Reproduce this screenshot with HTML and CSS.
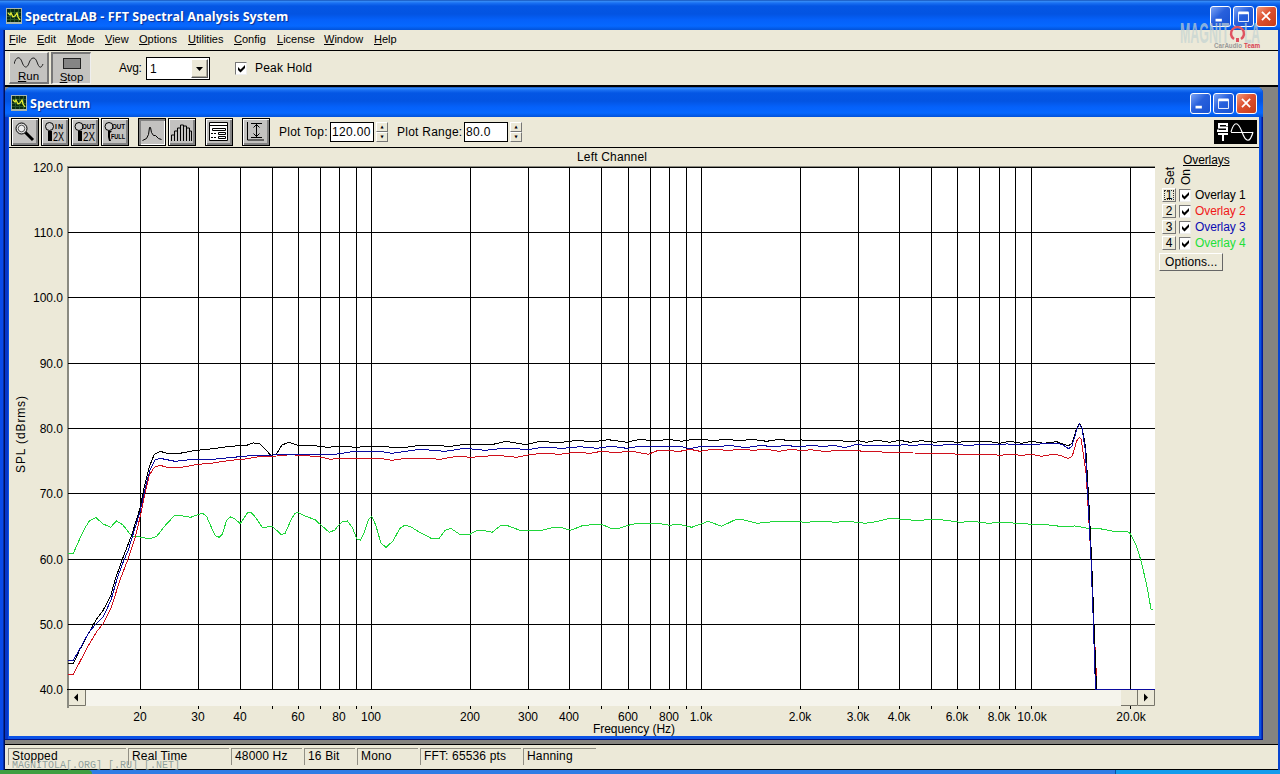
FILE: index.html
```html
<!DOCTYPE html>
<html lang="en">
<head>
<meta charset="utf-8">
<title>SpectraLAB - FFT Spectral Analysis System</title>
<link rel="stylesheet" href="styles.css">
</head>
<body>
<svg class="defs" width="0" height="0">
  <defs>
    <symbol id="app" viewBox="0 0 16 16"><path fill="#a9b7b0" d="M0 0h16v16H0z"/><path fill="#0a2a12" d="M1 1h14v13H1z"/><path d="M4.500 1v13M8.500 1v13M12.500 1v13M1 4.500h14M1 8.500h14M1 11.500h14" stroke="#27562b"/><path d="M2 5l2 2 1-2 2 4 2-1 2-3 1 4 2 3" fill="none" stroke="#e5ee35" stroke-width="1.300"/></symbol>
    <symbol id="tick" viewBox="0 0 9 9"><path d="M1 3v3l2.500 2.500L8 4V1L3.500 5.500z"/></symbol>
  </defs>
</svg>
<div class="window">
  <header class="titlebar">
    <svg class="appicon"><use href="#app"/></svg><h1 class="caption main">SpectraLAB - FFT Spectral Analysis System</h1>
    <div class="controls"><span class="ctl"><svg viewBox="0 0 21 21"><path d="M5 13h7v3H5z" fill="#fff"/></svg></span><span class="ctl"><svg viewBox="0 0 21 21"><path d="M5 6h11v10H5z" fill="none" stroke="#fff"/><path d="M5 5h11v3H5z" fill="#fff"/></svg></span><span class="ctl close"><svg viewBox="0 0 21 21"><path d="M5.500 5.500l9 9m0-9l-9 9" stroke="#fff" stroke-width="2"/></svg></span></div>
  </header>
  <nav class="menu">
    <span class="m1"><u>F</u>ile</span><span class="m2"><u>E</u>dit</span><span class="m3"><u>M</u>ode</span><span class="m4"><u>V</u>iew</span><span class="m5"><u>O</u>ptions</span><span class="m6"><u>U</u>tilities</span><span class="m7"><u>C</u>onfig</span><span class="m8"><u>L</u>icense</span><span class="m9"><u>W</u>indow</span><span class="m10"><u>H</u>elp</span>
  </nav>
  <div class="mainbar">
    <div class="run"><svg width="30" height="14" viewBox="0 0 30 14"><path d="M0 8C2 0 6 0 8 6s5 7 7 1 6-7 8-1 4 7 6 2" fill="none" stroke="#222"/></svg><span><u>R</u>un</span></div>
    <div class="run stop"><i class="block"></i><span><u>S</u>top</span></div>
    <label class="avg">Avg:</label>
    <div class="combo"><span>1</span><b><svg width="7" height="4"><path d="M0 0h7L3.500 4z"/></svg></b></div>
    <span class="check"><svg><use href="#tick"/></svg></span><span class="peak">Peak Hold</span>
  </div>
  <main class="mdi">
    <section class="child">
      <header class="titlebar childbar">
        <svg class="appicon"><use href="#app"/></svg><h2 class="caption">Spectrum</h2>
        <div class="controls"><span class="ctl"><svg viewBox="0 0 21 21"><path d="M5 13h7v3H5z" fill="#fff"/></svg></span><span class="ctl"><svg viewBox="0 0 21 21"><path d="M5 6h11v10H5z" fill="none" stroke="#fff"/><path d="M5 5h11v3H5z" fill="#fff"/></svg></span><span class="ctl close"><svg viewBox="0 0 21 21"><path d="M5.500 5.500l9 9m0-9l-9 9" stroke="#fff" stroke-width="2"/></svg></span></div>
      </header>
      <div class="client">
        <div class="tools">
          <span class="tool"><svg viewBox="0 0 24 24"><path d="M12 12l8 8" stroke="#000" stroke-width="3"/><circle cx="8.500" cy="8.500" r="5.500" fill="#ddd" stroke="#000"/><circle cx="8.500" cy="8.500" r="3.300" fill="#eee" stroke="#333" stroke-width=".8"/></svg></span>
          <span class="tool"><svg viewBox="0 0 24 24"><circle cx="6.500" cy="6.500" r="4" fill="#ccc" stroke="#000"/><path d="M5 11h4v10H5z"/><text class="tiny" x="12" y="9" textLength="8">IN</text><text class="two" x="10" y="21" textLength="11" lengthAdjust="spacingAndGlyphs">2X</text></svg></span>
          <span class="tool"><svg viewBox="0 0 24 24"><circle cx="6" cy="6.500" r="4" fill="#ccc" stroke="#000"/><path d="M5 11h4v10H5z"/><text class="tiny" x="9" y="9" textLength="13" lengthAdjust="spacingAndGlyphs">OUT</text><text class="two" x="10" y="21" textLength="12" lengthAdjust="spacingAndGlyphs">2X</text></svg></span>
          <span class="tool"><svg viewBox="0 0 24 24"><circle cx="6" cy="6.500" r="4" fill="#ccc" stroke="#000"/><path d="M5 11h4l-2 2v5l1 3H6l-1-4z"/><text class="tiny" x="9" y="9" textLength="13" lengthAdjust="spacingAndGlyphs">OUT</text><text class="tiny" x="8" y="19" textLength="14" lengthAdjust="spacingAndGlyphs">FULL</text></svg></span>
          <span class="tool on g1"><svg viewBox="0 0 24 24"><path d="M2.500 20.500l4-2 2-4 1-7 1 0 1 5 2 3h2l3 3 3 1" fill="none" stroke="#000"/></svg></span>
          <span class="tool"><svg viewBox="0 0 24 24"><path d="M1.500 21v-6h3v-4h3V8h3V5h3v1h3v2h3v3h2v10M4.500 15v6M7.500 11v10M10.500 8v13M13.500 6v15M16.500 8v13M19.500 11v10" fill="none" stroke="#000"/></svg></span>
          <span class="tool g2"><svg viewBox="0 0 24 24"><path d="M2.500 2.500h18v18h-18z" fill="#fff" stroke="#000"/><path d="M3 5.500h17M5.500 8.500h13v2h-13zM11.500 12.500h7v2h-7zM11.500 16.500h7v2h-7z" fill="none" stroke="#000"/><path d="M4 13.500h2m1 0h2M4 17.500h2m1 0h2" stroke="#000"/></svg></span>
          <span class="tool g2"><svg viewBox="0 0 24 24"><path d="M3.500 2v18H20M7 3.500h11M7 17.500h11M12.500 4v13M9.500 7.500l3-3 3 3M9.500 13.500l3 3 3-3" fill="none" stroke="#000"/></svg></span>
          <label class="lab top">Plot Top:</label><div class="field">120.00</div><div class="spin"><i>▲</i><i>▼</i></div>
          <label class="lab range">Plot Range:</label><div class="field">80.0</div><div class="spin"><i>▲</i><i>▼</i></div>
          <svg class="st" viewBox="0 0 43 24"><path fill="#000" d="M0 0h43v24H0z"/><path d="M13 6V4H5v3.500h8V11H4V9.500M4 14h10M9 14v7" fill="none" stroke="#fff" stroke-width="2"/><path d="M17 12.500h22M17 12C20 1 24 1 28 12s8 11 11 0" fill="none" stroke="#fff" stroke-width="1.200"/></svg>
        </div>
        <div class="workspace">
          <svg class="chart" width="1147" height="588" viewBox="9 148 1147 588">
            <path fill="#fff" d="M68 167h1087v523H68z"/>
            <path fill="#8a8a80" d="M67 166h1088v1H67zM67 166h2v542h-2z"/>
            <g class="grid"><path d="M68 167.500H1155M68 232.500H1155M68 297.500H1155M68 363.500H1155M68 428.500H1155M68 493.500H1155M68 559.500H1155M68 624.500H1155M67 689.500H1155"/><path d="M140.500 168V690M198.500 168V690M240.500 168V690M272.500 168V690M298.500 168V690M320.500 168V690M339.500 168V690M356.500 168V690M371.500 168V690M470.500 168V690M528.500 168V690M569.500 168V690M601.500 168V690M628.500 168V690M650.500 168V690M669.500 168V690M686.500 168V690M701.500 168V690M800.500 168V690M858.500 168V690M899.500 168V690M931.500 168V690M957.500 168V690M979.500 168V690M999.500 168V690M1015.500 168V690M1031.500 168V690M1130.500 168V690"/></g>
            <g class="curves">
              <polyline stroke="#1fd63a" points="68.300,553.300 73.300,553.300 80.700,536.700 85,528 89.300,521 96,517.700 103.300,524 110.700,527.300 113.500,524 116.700,521 122.700,524.700 130,534 134,536.500 140,537 149.300,539 156.700,536.300 165,525.700 174.300,515.700 181.700,515.700 190.700,517.300 197,515 202.700,513.300 206.700,516.700 214,533.300 216,536 219.300,537.300 222.300,534.300 226.700,520 230.700,516.700 235,519 240.300,523.700 247.300,513 251,512.300 255,516.700 262.300,527.300 272.700,526.700 281,534.300 285,533.700 291.700,518.300 295,513.500 297.700,512.300 305,516 315,519.700 321.700,525.700 329.300,532.300 335,530 339.300,524.300 343,521.500 347.300,521 352.300,527.300 356.700,538.700 360.300,540.300 364,532.700 368.300,520 371.700,516.300 375.700,525 381,543.300 386,547.300 392.700,541.300 400,528.300 405,525 411.700,527.300 420,532.700 426.700,535.700 431.700,538.700 439,538.700 445,530.300 450.700,528.300 460.700,535 469.300,534.700 477.300,530.300 485,530.700 492.300,532.300 500,526 506.700,525.300 520,530.300 541.700,530.300 553.300,527.300 561.700,527.700 570.700,530.300 583.300,525.300 601.700,524.300 611.700,528.700 620,528 631.700,524.300 640,523.300 658.300,523.300 670,525.300 678.300,524 691.700,527.300 700,524.300 708.300,521.300 721.700,526.300 736.700,519 743.300,519.700 756.700,523.300 776.700,521.300 796.700,521.700 806.700,522.300 821.700,521 835,522.300 848.300,521.300 865,523.300 876.700,521.700 890,518.300 903.300,519.300 918.300,520.700 931.700,519 946.700,520.300 960,522.300 973.300,521.300 988,523.300 1000,522.300 1018,523.300 1031.700,524.300 1046.700,524.700 1060,526.300 1075,526 1088,528.300 1100,528.700 1111.700,531 1126.700,531.300 1130,533.300 1136.700,546.700 1141,560.700 1146.700,585 1151,609 1152.700,609.700"/>
              <polyline stroke="#d0101c" points="68.300,674.300 73.300,674.300 88.300,645.700 96.700,631.700 103.300,623.300 111,608.300 120,580 128.300,558.300 135,538.300 141,513.300 145,493.300 149.300,475 154.300,467.300 160,465.300 167.300,467.300 181.700,467.300 198.300,464.300 213.300,463 230,460.300 243.300,459.300 261.700,456.300 276.700,456 290,454.700 306.700,455.700 320,457 330.700,459.300 340,458.300 380,458.300 391.700,460.300 406.700,458.300 426.700,458.300 440,459.300 456.700,456.300 471.700,457.300 496.700,455.300 516.700,457.300 528.300,455 541.700,453.300 560,454.300 575,452.300 590,453.300 601.700,451.300 616.700,452.700 630,451 648.300,454.300 658.300,450.300 680,451.300 690,449.300 700,451.300 711.700,449.300 728.300,450.300 743.300,449.300 753.300,450.300 766.700,449.300 779.300,451.300 791.700,449.300 801.700,450.700 810.700,449.700 823.300,451.300 840,450.700 880,451.300 883,452.300 913,453 951.700,453.300 956.700,454.300 990,454.300 1000,455.300 1010,454.300 1021.700,455.300 1031.700,454.300 1041.700,456.300 1053.300,454.300 1060,455.300 1068.300,458.700 1072.300,456 1076.700,441 1079.300,437.300 1081,439.300 1083.300,453.300 1086,473 1088.600,515 1091.600,570 1094,625 1097,689"/>
              <polyline stroke="#000" points="68.300,663.300 73.300,663.300 80,649.300 86.700,636.700 96,620 103.300,610 111,595 115,580 123.300,556.700 131.700,535 140,508.300 144,488.300 149.300,466.700 154.300,454.300 160,451.300 167.300,453.300 180,453.300 193.300,450.700 213.300,448.700 230,446.300 246.700,445.300 253.300,443 259.300,443.300 265,448.700 270.700,455.300 276,454.700 281.700,445.300 288.300,442.300 298.300,445.300 315,445.700 326.700,447.300 340,446.300 356.700,447.300 368,446.300 380,446.300 393.300,447.300 408.300,447 420,445.300 440,445.300 448.300,446.700 465,444.300 493.300,444.300 506,441.300 521.700,444 527.300,444.300 540,441.300 558.300,442.700 578.300,440.300 591.700,442 608.300,439.700 626.700,442.300 640,439.300 655,441 668.300,439.300 681.700,441.300 693.300,439.300 703.300,439.300 713.300,440.700 725,439.300 740,440.700 751.700,439.300 766.700,441.300 779.300,439.300 791.700,441 800,440 835,440.300 850,441.700 858,440.700 866.700,442.300 877,440.300 890,442.300 900,440.300 910,442.300 921.700,440.700 935,442.300 945,441 956.700,442.300 970,441.300 985,442 988.300,441.300 1000,443.300 1010,441.300 1021.700,443.300 1031.700,441.300 1043.300,443.300 1056.700,441.700 1068.300,446 1072.300,442.700 1076.700,428.300 1079.300,423.300 1081.700,426.700 1085.600,446.700 1088.800,500 1091.600,560 1093.600,613 1096.500,689"/>
              <polyline stroke="#0b0ba0" points="68.300,660.300 73.300,660.300 80.700,647.300 89,632 96,624 103.300,616.700 111,600 117.300,578 123.300,561.700 128.300,550 140,511.700 146,485 150,470 155,460 160,458.300 175,461.300 193.300,459.300 213.300,459.300 233.300,457.300 255,455.300 273.300,455 290,454.300 335,454.300 355,451.300 380,451.300 391.700,453.300 420,449.300 433,450.300 445,451.300 465,448.300 485,450.300 500,448.700 515,448.300 526.700,450 541.700,447.300 563.300,448.300 580,446.700 596.700,448.300 611.700,446.300 626.700,448.300 640,446.300 656.700,447 680,446.300 690,448.700 701.700,446.300 716.700,447 730,445.300 745,447.700 761.700,445.300 773.300,447 786.700,445.300 798.300,447 811.700,445.300 823.300,446.700 833.300,445.300 845,447.700 856.700,444.300 870,446 900,445.300 903,444.300 912,445.700 923.300,444.300 936.700,445.300 956.700,444.300 970,445.700 978,444.300 985,445 1006.700,444 1031.700,444.300 1058,443.300 1063.300,445 1068.300,448.700 1071.700,446.700 1076.700,430 1079.300,424 1082,428.300 1085.300,450 1088,500 1091,560 1093,613 1095.500,689.500 1155,689.500"/>
            </g>
            <path fill="#f5f4ec" d="M69 690h1086v16H69z"/>
            <g class="sb"><path fill="#ece9d8" d="M69 690h17v16H69zM1121 690h17v16h-17zM1138 690h17v16h-17z"/><path d="M85.500 690v15.500H69M1137.500 690v15.500H1121M1154.500 690v15.500H1138" fill="none" stroke="#77756a"/><path d="M78 693.500v8l-4-4zM1144 693.500v8l4-4z"/></g>
            <path class="ticks" d="M140.500 706v3M198.500 706v3M240.500 706v3M272.500 706v3M298.500 706v3M320.500 706v3M339.500 706v3M356.500 706v3M371.500 706v3M470.500 706v3M528.500 706v3M569.500 706v3M601.500 706v3M628.500 706v3M650.500 706v3M669.500 706v3M686.500 706v3M701.500 706v3M800.500 706v3M858.500 706v3M899.500 706v3M931.500 706v3M957.500 706v3M979.500 706v3M999.500 706v3M1015.500 706v3M1031.500 706v3M1130.500 706v3"/>
            <g class="ylab"><text x="63" y="172">120.0</text><text x="63" y="237">110.0</text><text x="63" y="302">100.0</text><text x="63" y="368">90.0</text><text x="63" y="433">80.0</text><text x="63" y="498">70.0</text><text x="63" y="564">60.0</text><text x="63" y="629">50.0</text><text x="63" y="694">40.0</text></g>
            <g class="xlab"><text x="140" y="721">20</text><text x="198" y="721">30</text><text x="240" y="721">40</text><text x="298" y="721">60</text><text x="339" y="721">80</text><text x="371" y="721">100</text><text x="470" y="721">200</text><text x="528" y="721">300</text><text x="569" y="721">400</text><text x="628" y="721">600</text><text x="669" y="721">800</text><text x="701" y="721">1.0k</text><text x="800" y="721">2.0k</text><text x="858" y="721">3.0k</text><text x="899" y="721">4.0k</text><text x="957" y="721">6.0k</text><text x="999" y="721">8.0k</text><text x="1032" y="721">10.0k</text><text x="1131" y="721">20.0k</text>
            <text x="612" y="161" textLength="70">Left Channel</text><text x="634" y="733" textLength="82">Frequency (Hz)</text><text transform="translate(25 434.500) rotate(-90)" textLength="77">SPL (dBrms)</text></g>
          </svg>
          <aside class="overlays">
            <div class="ovtitle"><u>Overlays</u></div>
            <div class="ovhead"><span>Set</span><span>On</span></div>
            <div class="ov"><b class="focus">1</b><span class="check"><svg><use href="#tick"/></svg></span><span>Overlay 1</span></div>
            <div class="ov red"><b>2</b><span class="check"><svg><use href="#tick"/></svg></span><span>Overlay 2</span></div>
            <div class="ov blue"><b>3</b><span class="check"><svg><use href="#tick"/></svg></span><span>Overlay 3</span></div>
            <div class="ov green"><b>4</b><span class="check"><svg><use href="#tick"/></svg></span><span>Overlay 4</span></div>
            <div class="options">Options...</div>
          </aside>
        </div>
      </div>
    </section>
  </main>
  <footer class="status"><span class="s1">Stopped</span><span class="s2">Real Time</span><span class="s3">48000 Hz</span><span class="s4">16 Bit</span><span class="s5">Mono</span><span class="s6">FFT: 65536 pts</span><span class="s7">Hanning</span></footer>
</div>
<div class="taskbar"><i class="start"></i><i class="tray"></i></div>
<svg class="brand" width="84" height="36" viewBox="0 0 84 36"><g class="brandname"><text x="0" y="25" textLength="49" lengthAdjust="spacingAndGlyphs">MAGNIT</text><text x="64" y="25" textLength="16" lengthAdjust="spacingAndGlyphs">LA</text></g><path d="M54 21a6.500 6.500 0 1 1 7 0" fill="none" stroke="#df5360" stroke-width="2.500"/><path d="M56 20h3v4h-3z" fill="#df5360"/><text class="team" x="34" y="30" textLength="28" lengthAdjust="spacingAndGlyphs">CarAudio</text><text class="team hot" x="64" y="30" textLength="16" lengthAdjust="spacingAndGlyphs">Team</text></svg>
<svg class="mark" width="180" height="14"><text x="3" y="9" textLength="168">MAGNITOLA[.ORG] [.RU] [.NET]</text></svg>
</body>
</html>
```
FILE: styles.css
```css
* { box-sizing: border-box; }
body { margin: 0; width: 1280px; height: 774px; overflow: hidden; position: relative; display: flex; flex-direction: column; background: #0a4fe0; font: 12px/14px "Liberation Sans", sans-serif; color: #000; }
.defs { position: absolute; }
.window { height: 770px; display: flex; flex-direction: column; padding: 0 2px 0 5px; background: linear-gradient(90deg, #0a4be8 0 3px, #00105e 4px 5px, #ece9d8 5px 1277px, #000b4c 1277px 1278px, #0845d0 1278px); }
.titlebar { height: 30px; flex: none; margin: 0 -2px 0 -5px; padding: 2px 3px 0 6px; display: flex; align-items: center; background: linear-gradient(#063a9e 0, #3a90f8 1px, #1a70f2 3px, #0456e4 6px, #0354e2 14px, #0561fa 20px, #0668ff 26px, #0252d8 30px); }
.appicon { width: 16px; height: 16px; margin-right: 3px; margin-top: -1px; }
.caption { margin: 0; font: bold 12.5px/18px "Open Sans", sans-serif; color: #fff; text-shadow: 1px 1px 1px #0a2d90; flex: 1; white-space: nowrap; }
.main { letter-spacing: .07px; padding-top: 1px; }
.controls { display: flex; gap: 2px; }
.ctl { width: 21px; height: 21px; border: 1px solid #fff; border-radius: 3px; background: linear-gradient(135deg, #7ca4f5, #2860dc 45%, #1852d2); }
.ctl svg { display: block; width: 19px; height: 19px; }
.close { background: linear-gradient(135deg, #f19a7c, #dd5030 45%, #c63c18); }
.menu { height: 20px; flex: none; display: flex; align-items: center; padding: 0 0 2px 4px; background: #ece9d8; font-size: 11px; }
.menu span, .status span, .peak, .lab, .avg { white-space: nowrap; }
.m1 { width: 28px; } .m2 { width: 30px; } .m3 { width: 38px; } .m4 { width: 34px; } .m5 { width: 49px; } .m6 { width: 46px; } .m7 { width: 43px; } .m8 { width: 47px; } .m9 { width: 50px; } .m10 { width: 40px; }
.mainbar { height: 36px; flex: none; display: flex; align-items: center; background: #ece9d8; border-top: 1px solid #000; border-bottom: 1px solid #000; padding-left: 4px; }
.run { width: 40px; height: 32px; background: #c4c3c0; border: 1px solid #f5f5f0; border-right: 2px solid #777; border-bottom: 2px solid #777; display: flex; flex-direction: column; align-items: center; justify-content: flex-end; margin-right: 2px; }
.run span { line-height: 12px; font-size: 11.5px; }
.run.stop { border: 2px solid #777; border-right: 1px solid #eee; border-bottom: 1px solid #eee; }
.block { width: 18px; height: 11px; background: #858585; border: 1px solid #222; margin-bottom: 2px; }
.avg { margin-left: 26px; width: 27px; letter-spacing: -.3px; }
.combo { width: 64px; height: 23px; border: 1px solid #000; background: #fff; display: flex; justify-content: space-between; align-items: center; padding: 1px 1px 1px 3px; margin-top: 1px; }
.combo b { width: 17px; height: 19px; background: #ece9d8; border: 1px solid #fff; border-right-color: #555; border-bottom-color: #555; box-shadow: inset -1px -1px #aaa799; display: grid; place-items: center; }
.check { width: 12px; height: 13px; background: #fff; border: 1px solid #777; border-right-color: #eee; border-bottom-color: #eee; display: grid; place-items: center; flex: none; }
.check svg { width: 9px; height: 9px; }
.mainbar .check { margin-left: 25px; }
.peak { margin-left: 8px; letter-spacing: .2px; }
.mdi { flex: 1; background: #858480; display: flex; padding: 0 15px 4px 0; border-bottom: 1px solid #000; border-top: 1px solid #000; }
.child { width: 1258px; height: 653px; flex: none; background: linear-gradient(90deg, #0636c8 0 3px, #0b52e6 3px 1256px, #0019a0 1257px); display: flex; flex-direction: column; padding: 0 4px 4px; border-radius: 6px 6px 0 0; border-bottom: 1px solid #00108a; }
.childbar { margin: 0 -4px; padding: 3px 6px 0 6px; border-radius: 6px 6px 0 0; }
.client { flex: 1; background: #ece9d8; display: flex; flex-direction: column; }
.tools { height: 31px; flex: none; display: flex; align-items: center; border-bottom: 1px solid #000; padding: 0 2px; gap: 2px; }
.tool { width: 28px; height: 28px; border: 1px solid #000; background: #c3c2c0; box-shadow: inset 1px 1px #fff, inset -2px -2px #828282; flex: none; padding: 1px; }
.tool svg { width: 24px; height: 24px; display: block; }
.tool.on { box-shadow: inset 2px 2px #828282, inset -1px -1px #fff; }
.g1, .g2 { margin-left: 7px; }
.tiny { font: bold 7px "Liberation Sans", sans-serif; }
.two { font: 12px "Liberation Sans", sans-serif; }
.lab { letter-spacing: .25px; }
.top { width: 50px; margin-left: 7px; } .range { width: 65px; margin-left: 7px; }
.field { width: 44px; height: 20px; border: 1px solid #000; background: #fff; line-height: 18px; padding-left: 1px; letter-spacing: .35px; flex: none; margin-right: -1px; }
.top + .field { margin-left: -1px; }
.range + .field { margin-left: 0; }
.spin { width: 12px; height: 20px; display: flex; flex-direction: column; margin-left: 1px; }
.spin i { height: 10px; font: 4px/8px "DejaVu Sans", sans-serif; text-align: center; border: 1px solid #fff; border-right-color: #777; border-bottom-color: #777; }
.st { width: 43px; height: 24px; margin-left: auto; }
.workspace { flex: 1; display: flex; min-height: 0; }
.chart { display: block; flex: none; }
.grid, .ticks { stroke: #000; shape-rendering: crispEdges; }
.curves { fill: none; shape-rendering: crispEdges; }
.ylab { text-anchor: end; } .xlab { text-anchor: middle; }
.overlays { flex: 1; padding: 5px 0 0 3px; white-space: nowrap; }
.ovtitle { padding-left: 24px; height: 14px; letter-spacing: -.1px; }
.ovhead { height: 20px; display: flex; padding-left: 3px; }
.ovhead span { width: 16px; height: 18px; writing-mode: vertical-rl; transform: rotate(180deg); line-height: 16px; }
.ov { height: 16px; display: flex; align-items: center; padding-left: 3px; letter-spacing: -.1px; }
.ov b { width: 14px; height: 14px; line-height: 12px; font-weight: normal; text-align: center; border: 1px solid #fff; border-right-color: #777; border-bottom-color: #777; }
.ov b.focus { outline: 1px dotted #333; outline-offset: -3px; }
.ov .check { margin: 0 4px 0 3px; }
.red span { color: #f01818; } .blue span { color: #0c0cb4; } .green span { color: #1ee038; }
.options { width: 64px; height: 18px; margin-top: 2px; line-height: 16px; padding-left: 5px; letter-spacing: .1px; border: 1px solid #fff; border-right-color: #666; border-bottom-color: #666; }
.status { height: 25px; flex: none; background: #ece9d8; display: flex; padding: 3px 3px; gap: 2px; border-bottom: 1px solid #000; }
.status span { height: 17px; border-top: 1px solid #918f84; border-left: 1px solid #918f84; padding-left: 3px; line-height: 15px; letter-spacing: .15px; }
.s1 { width: 118px; } .s2 { width: 101px; } .s3 { width: 71px; } .s4 { width: 51px; } .s5 { width: 61px; } .s6 { width: 101px; } .s7 { width: 73px; }
.taskbar { height: 4px; display: flex; justify-content: space-between; background: #2f7ce4; }
.start { width: 92px; background: #3f9e42; border-radius: 0 4px 0 0; }
.tray { width: 165px; background: #149cec; border-left: 1px solid #0b50a0; }
.brand { position: absolute; left: 1180px; top: 18px; overflow: visible; }
.brandname { font: bold 29px "Liberation Sans", sans-serif; fill: #c3d3d2; fill-opacity: .7; }
.team { font: bold 6.5px "Liberation Sans", sans-serif; fill: #999; } .team.hot { fill: #d84050; }
.mark { position: absolute; left: 9px; top: 759px; font: 10px "Liberation Mono", monospace; fill: #7d9290; fill-opacity: .85; }
```
